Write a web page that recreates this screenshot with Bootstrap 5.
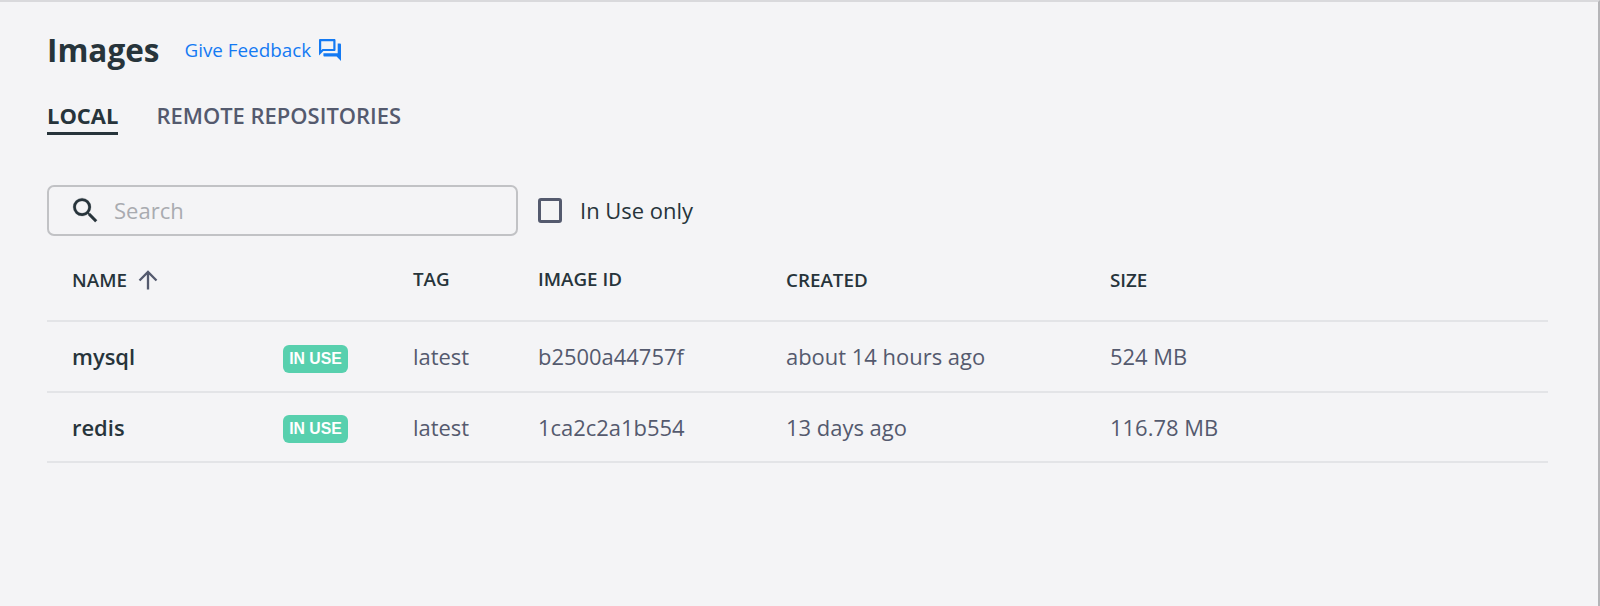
<!DOCTYPE html>
<html lang="en">
<head>
<meta charset="utf-8">
<meta name="viewport" content="width=device-width, initial-scale=1">
<title>Images</title>
<link href="https://cdn.jsdelivr.net/npm/bootstrap@5.3.0/dist/css/bootstrap.min.css" rel="stylesheet">
<style>
  body { font-family: "Open Sans", sans-serif; background: #f4f4f6; color: #27343b; font-size: 21.95px; line-height: 30px; }
  .app-pane { height: 606px; padding: 26px 50px 0 47px; border-top: 2px solid #d9d9dc; border-right: 2px solid #b5b5b8; }
  .page-title { font-size: 31.5px; line-height: 44px; font-weight: 700; }
  .feedback { font-size: 18.85px; color: #147af3; margin-left: 25px; gap: 8px; }
  .tab-row { margin-top: 28px; gap: 38px; }
  .tab-row .nav-link { padding: 1px 0 1px; font-size: 21.96px; line-height: 30px; font-weight: 600; color: #545a6e; border-bottom: 3px solid transparent; }
  .tab-row .nav-link.active { color: #27343b; font-weight: 700; border-color: #27343b; }
  .filters { margin-top: 50px; gap: 20px; }
  .search-box { width: 471px; height: 51px; border: 2px solid #c1c2c5; border-radius: 7px; padding-left: 20px; gap: 12px; }
  .search-box .form-control { font-size: 22px; color: #27343b; line-height: 30px; margin-top: -2px; }
  .search-box .form-control::placeholder { color: #a9abb0; opacity: 1; }
  .in-use .form-check-input { width: 24px; height: 25px; border: 3px solid #545a6e; border-radius: 3px; background: transparent; }
  .in-use { gap: 18px; }
  .image-table { table-layout: fixed; --bs-table-bg: transparent; color: #545a6e; }
  .image-table > :not(caption) > * > * { padding: 0 0 0 25px; border-bottom: 2px solid #e3e4e7; color: #545a6e; vertical-align: middle; }
  .image-table th { font-size: 18.8px; font-weight: 600; }
  .image-table thead th { height: 85px; color: #27343b !important; padding-top: 3px; }
  .image-table tbody td { height: 70.5px; padding-top: 2px; }
  .image-table .repo { color: #27343b; font-weight: 600; }
  .head-up { position: relative; top: -1px; }
  .sort-arrow { margin-left: 9px; }
  .image-table .name-cell { padding-right: 40px; }
  .use-badge { width: 65px; height: 28px; border-radius: 6px; background: #58d0ae; font: 700 15.8px/28px "Liberation Sans", sans-serif; padding: 0; position: relative; top: 1.5px; }
</style>
</head>
<body>
<main class="app-pane">
  <header class="d-flex align-items-center">
    <h1 class="page-title mb-0">Images</h1>
    <a href="#" class="feedback d-flex align-items-center text-decoration-none"><span>Give Feedback</span>
      <svg width="22" height="22" viewBox="2 2 20 20" fill="currentColor"><path d="M15 4v7H5.17L4 12.17V4h11m1-2H3c-.55 0-1 .45-1 1v14l4-4h10c.55 0 1-.45 1-1V3c0-.55-.45-1-1-1zm5 4h-2v9H6v2c0 .55.45 1 1 1h11l4 4V7c0-.55-.45-1-1-1z"/></svg>
    </a>
  </header>
  <nav class="nav tab-row">
    <a class="nav-link active" href="#">LOCAL</a>
    <a class="nav-link" href="#">REMOTE REPOSITORIES</a>
  </nav>
  <div class="filters d-flex align-items-center">
    <label class="search-box d-flex align-items-center">
      <svg class="flex-shrink-0" width="33" height="33" viewBox="0 0 24 24" fill="currentColor" stroke="currentColor" stroke-width=".15"><path d="M15.5 14h-.79l-.28-.27A6.471 6.471 0 0 0 16 9.5 6.5 6.5 0 1 0 9.5 16c1.61 0 3.09-.59 4.23-1.57l.27.28v.79l5 4.99L20.49 19l-4.99-5zm-6 0C7.01 14 5 11.99 5 9.5S7.01 5 9.5 5 14 7.01 14 9.5 11.99 14 9.5 14z"/></svg>
      <input class="form-control border-0 bg-transparent shadow-none p-0" type="text" placeholder="Search">
    </label>
    <label class="in-use d-flex align-items-center"><input class="form-check-input m-0" type="checkbox"><span>In Use only</span></label>
  </div>
  <table class="table image-table mb-0">
    <colgroup><col style="width:341px"><col style="width:125px"><col style="width:248px"><col style="width:324px"><col></colgroup>
    <thead>
      <tr>
        <th><span class="d-flex align-items-center">NAME
          <svg class="sort-arrow" width="24" height="24" viewBox="0 0 24 24" fill="none" stroke="#545a6e" stroke-width="2.3"><path d="M12 21.500V4M3.500 12.500 12 4l8.500 8.500"/></svg></span></th>
        <th><span class="head-up">TAG</span></th>
        <th><span class="head-up">IMAGE ID</span></th>
        <th>CREATED</th>
        <th>SIZE</th>
      </tr>
    </thead>
    <tbody>
      <tr>
        <td class="name-cell"><div class="d-flex align-items-center justify-content-between"><span class="repo">mysql</span><span class="badge use-badge">IN USE</span></div></td>
        <td>latest</td><td>b2500a44757f</td><td>about 14 hours ago</td><td>524 MB</td>
      </tr>
      <tr>
        <td class="name-cell"><div class="d-flex align-items-center justify-content-between"><span class="repo">redis</span><span class="badge use-badge">IN USE</span></div></td>
        <td>latest</td><td>1ca2c2a1b554</td><td>13 days ago</td><td>116.78 MB</td>
      </tr>
    </tbody>
  </table>
</main>
<script src="https://cdn.jsdelivr.net/npm/bootstrap@5.3.0/dist/js/bootstrap.bundle.min.js"></script>
</body>
</html>
